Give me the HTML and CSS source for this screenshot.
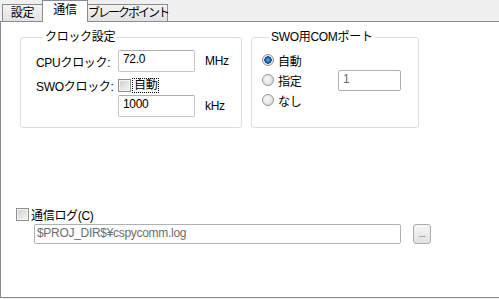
FILE: index.html
```html
<!DOCTYPE html>
<html lang="ja">
<head>
  <meta charset="UTF-8" />
  <title>通信</title>
  <link rel="stylesheet" href="styles.css">
</head>
<body>

  <div class="tabs">
    <div class="tab tab-setting">設定</div>
    <div class="tab active">通信</div>
    <div class="tab tab-break">ブレークポイント</div>
  </div>

  <div class="panel">
    <div class="groups">
      <fieldset class="group clock">
        <legend>クロック設定</legend>
        <div class="row row-cpu">
          <span class="label">CPUクロック:</span>
          <span class="field">72.0</span>
          <span class="unit">MHz</span>
        </div>
        <div class="row row-swo">
          <span class="label">SWOクロック:</span>
          <span class="check"><span class="box"></span><span class="focus">自動</span></span>
        </div>
        <div class="row row-khz">
          <span class="label"></span>
          <span class="field">1000</span>
          <span class="unit">kHz</span>
        </div>
      </fieldset>

      <fieldset class="group port">
        <legend>SWO用COMポート</legend>
        <div class="radio-row">
          <span class="radio"><span class="dot checked"></span>自動</span>
        </div>
        <div class="radio-row">
          <span class="radio"><span class="dot"></span>指定</span>
          <span class="field port-field disabled">1</span>
        </div>
        <div class="radio-row">
          <span class="radio"><span class="dot"></span>なし</span>
        </div>
      </fieldset>
    </div>

    <div class="log">
      <div class="log-check">
        <span class="box"></span>通信ログ(C)
      </div>
      <div class="log-path">
        <span class="field path disabled">$PROJ_DIR$¥cspycomm.log</span>
        <span class="browse">...</span>
      </div>
    </div>
  </div>

</body>
</html>
```

FILE: styles.css
```css
body {
  margin: 0;
  background: #f0f0f0;
  font-family: "Liberation Sans", "Noto Sans CJK JP", sans-serif;
  font-size: 12px;
  letter-spacing: -0.3px;
  color: #000;
  white-space: nowrap;
  overflow: hidden;
}

/* tabs */
.tabs {
  display: flex;
  align-items: flex-end;
  height: 21px;
  padding-left: 2px;
}
.tab {
  box-sizing: border-box;
  height: 17px;
  line-height: 17px;
  text-align: center;
  border: 1px solid #898c95;
  border-bottom: none;
  background: linear-gradient(#f3f3f3, #e2e2e2);
}
.tab-setting {
  width: 41px;
}
.tab-break {
  width: 81px;
  margin-left: -1px;
  letter-spacing: -2px;
}
.tab.active {
  width: 46px;
  height: 22px;
  line-height: 18px;
  margin-left: -1px;
  margin-bottom: -1px;
  background: #fff;
  position: relative;
  z-index: 1;
}

/* panel */
.panel {
  background: #fff;
  border: 1px solid #898c95;
  border-right: none;
  height: 275px;
}
.groups {
  display: flex;
  gap: 9px;
  margin: 8px 0 0 19px;
}
.group {
  margin: 0;
  padding: 0;
  border: 1px solid #d5dfe5;
  border-radius: 3px;
  box-sizing: border-box;
}
.group legend {
  margin-left: 7px;
  padding: 0 2px;
  line-height: 15px;
}
.clock {
  width: 222px;
  padding: 5px 0 10px 15px;
}
.port {
  width: 168px;
  padding: 5px 0 16px 10px;
}

.row {
  display: flex;
  align-items: center;
}
.label {
  width: 82px;
}
.row-cpu, .row-khz {
  height: 22px;
}
.row-swo {
  height: 17px;
  margin-top: 5px;
}
.row-khz {
  margin-top: 1px;
}
.unit {
  margin-left: 10px;
}

.field {
  box-sizing: border-box;
  width: 77px;
  height: 22px;
  line-height: 17px;
  padding: 0 4px;
  border: 1px solid #c4c6cc;
  border-top-color: #abadb3;
  border-radius: 2px;
  background: #fff;
}
.field.disabled {
  color: #6d6d6d;
  border-color: #adb2b5;
}

.check {
  display: flex;
  align-items: center;
}
.box {
  width: 13px;
  height: 13px;
  box-sizing: border-box;
  border: 1px solid #8e8f8f;
  box-shadow: inset 0 0 0 1px #f4f4f4;
  background: linear-gradient(135deg, #cfcfcf, #f6f6f6);
  margin-right: 2px;
}
.focus {
  outline: 1px dotted #000;
  padding: 0 1px;
  line-height: 13px;
}

/* radios */
.radio-row {
  display: flex;
  align-items: center;
  height: 20px;
}
.radio {
  display: flex;
  align-items: center;
  width: 76px;
}
.dot {
  width: 12px;
  height: 12px;
  box-sizing: border-box;
  border-radius: 50%;
  border: 1px solid #969696;
  background: radial-gradient(circle at 40% 40%, #fafafa, #d2d2d2);
  margin-right: 4px;
}
.dot.checked {
  background: radial-gradient(circle, #6ab2ea 0, #1a5fa8 2.5px, #1c4e8a 3.5px, #f4f4f4 4px, #dcdcdc 6px);
}
.port-field {
  width: 63px;
  height: 21px;
}

/* log */
.log {
  margin: 79px 0 0 15px;
}
.log-check {
  display: flex;
  align-items: center;
  height: 14px;
}
.log-path {
  display: flex;
  margin: 3px 0 0 18px;
}
.path {
  width: 367px;
  height: 20px;
  line-height: 17px;
  padding: 0 2px;
}
.browse {
  box-sizing: border-box;
  width: 18px;
  height: 20px;
  margin-left: 12px;
  border: 1px solid #acacac;
  border-radius: 3px;
  background: linear-gradient(#f6f6f6, #e2e2e2);
  color: #555;
  font-size: 9px;
  text-align: center;
  line-height: 18px;
}
```
